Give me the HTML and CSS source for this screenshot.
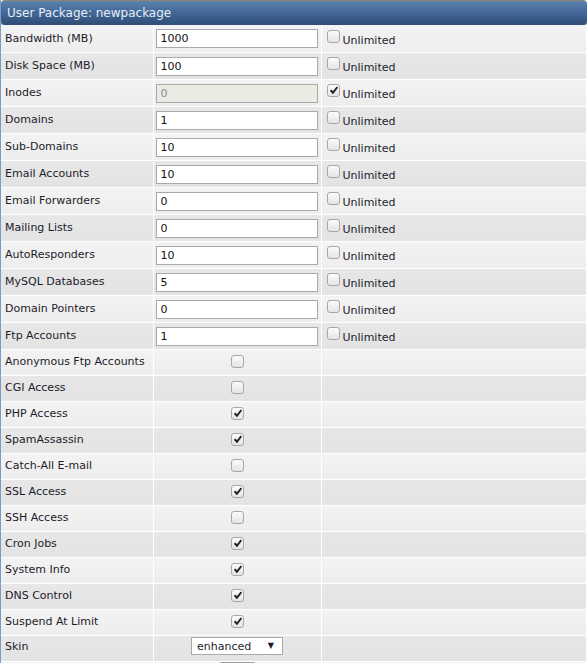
FILE: index.html
```html
<!DOCTYPE html>
<html lang="en">

<head>
    <meta charset="UTF-8">
    <title>User Package: newpackage</title>
    <link rel="stylesheet" href="styles.css">
</head>

<body>
    <div class="panel">
        <div class="panel-title">User Package: newpackage</div>
        <table class="pkg">
            <tr class="limit">
                <td class="label">Bandwidth (MB)</td>
                <td class="field"><input class="num" type="text" value="1000"></td>
                <td class="extra"><span class="cb"></span>Unlimited</td>
            </tr>
            <tr class="limit">
                <td class="label">Disk Space (MB)</td>
                <td class="field"><input class="num" type="text" value="100"></td>
                <td class="extra"><span class="cb"></span>Unlimited</td>
            </tr>
            <tr class="limit">
                <td class="label">Inodes</td>
                <td class="field"><input class="num" type="text" value="0" disabled></td>
                <td class="extra"><span class="cb on"></span>Unlimited</td>
            </tr>
            <tr class="limit">
                <td class="label">Domains</td>
                <td class="field"><input class="num" type="text" value="1"></td>
                <td class="extra"><span class="cb"></span>Unlimited</td>
            </tr>
            <tr class="limit">
                <td class="label">Sub-Domains</td>
                <td class="field"><input class="num" type="text" value="10"></td>
                <td class="extra"><span class="cb"></span>Unlimited</td>
            </tr>
            <tr class="limit">
                <td class="label">Email Accounts</td>
                <td class="field"><input class="num" type="text" value="10"></td>
                <td class="extra"><span class="cb"></span>Unlimited</td>
            </tr>
            <tr class="limit">
                <td class="label">Email Forwarders</td>
                <td class="field"><input class="num" type="text" value="0"></td>
                <td class="extra"><span class="cb"></span>Unlimited</td>
            </tr>
            <tr class="limit">
                <td class="label">Mailing Lists</td>
                <td class="field"><input class="num" type="text" value="0"></td>
                <td class="extra"><span class="cb"></span>Unlimited</td>
            </tr>
            <tr class="limit">
                <td class="label">AutoResponders</td>
                <td class="field"><input class="num" type="text" value="10"></td>
                <td class="extra"><span class="cb"></span>Unlimited</td>
            </tr>
            <tr class="limit">
                <td class="label">MySQL Databases</td>
                <td class="field"><input class="num" type="text" value="5"></td>
                <td class="extra"><span class="cb"></span>Unlimited</td>
            </tr>
            <tr class="limit">
                <td class="label">Domain Pointers</td>
                <td class="field"><input class="num" type="text" value="0"></td>
                <td class="extra"><span class="cb"></span>Unlimited</td>
            </tr>
            <tr class="limit">
                <td class="label">Ftp Accounts</td>
                <td class="field"><input class="num" type="text" value="1"></td>
                <td class="extra"><span class="cb"></span>Unlimited</td>
            </tr>
            <tr class="opt">
                <td class="label">Anonymous Ftp Accounts</td>
                <td class="center"><span class="cb"></span></td>
                <td></td>
            </tr>
            <tr class="opt">
                <td class="label">CGI Access</td>
                <td class="center"><span class="cb"></span></td>
                <td></td>
            </tr>
            <tr class="opt">
                <td class="label">PHP Access</td>
                <td class="center"><span class="cb on"></span></td>
                <td></td>
            </tr>
            <tr class="opt">
                <td class="label">SpamAssassin</td>
                <td class="center"><span class="cb on"></span></td>
                <td></td>
            </tr>
            <tr class="opt">
                <td class="label">Catch-All E-mail</td>
                <td class="center"><span class="cb"></span></td>
                <td></td>
            </tr>
            <tr class="opt">
                <td class="label">SSL Access</td>
                <td class="center"><span class="cb on"></span></td>
                <td></td>
            </tr>
            <tr class="opt">
                <td class="label">SSH Access</td>
                <td class="center"><span class="cb"></span></td>
                <td></td>
            </tr>
            <tr class="opt">
                <td class="label">Cron Jobs</td>
                <td class="center"><span class="cb on"></span></td>
                <td></td>
            </tr>
            <tr class="opt">
                <td class="label">System Info</td>
                <td class="center"><span class="cb on"></span></td>
                <td></td>
            </tr>
            <tr class="opt">
                <td class="label">DNS Control</td>
                <td class="center"><span class="cb on"></span></td>
                <td></td>
            </tr>
            <tr class="opt">
                <td class="label">Suspend At Limit</td>
                <td class="center"><span class="cb on"></span></td>
                <td></td>
            </tr>
            <tr class="opt skin">
                <td class="label">Skin</td>
                <td class="center"><span class="select">enhanced<span class="arrow">&#9660;</span></span></td>
                <td></td>
            </tr>
            <tr class="opt last">
                <td class="label"></td>
                <td class="center top"><button class="btn">Save</button></td>
                <td></td>
            </tr>
        </table>
    </div>
</body>

</html>
```

FILE: styles.css
```css
/* General Reset */
* {
    margin: 0;
    padding: 0;
    box-sizing: border-box;
}

body {
    font-family: 'DejaVu Sans', Verdana, sans-serif;
    font-size: 11px;
    color: #1c1c2a;
    background: #fff;
}

.panel {
    width: 587px;
    border-left: 1px solid #7b9cc2;
}

.panel-title {
    height: 25px;
    padding: 5px 6px 0;
    font-size: 12px;
    color: #e6edf5;
    background: linear-gradient(#5b83ae, #44699a 45%, #2e4d76);
    border-top: 1px solid #8d8475;
    border-radius: 4px;
    box-shadow: 0 1px 0 #8b8b8b;
}

.pkg {
    width: 586px;
    border-collapse: collapse;
    table-layout: fixed;
}

.pkg td {
    border-bottom: 1px solid #fff;
    border-right: 1px solid #fff;
    vertical-align: middle;
}

.pkg td:nth-child(1) {
    width: 152px;
}

.pkg td:nth-child(2) {
    width: 168px;
}

.pkg tr:nth-child(odd) td {
    background: linear-gradient(#f3f3f3, #ededed);
}

.pkg tr:nth-child(even) td {
    background: linear-gradient(#e7e7e7, #e3e3e3);
}

.pkg tr.limit td {
    height: 27px;
}

.pkg tr.opt td {
    height: 26px;
}

.label {
    padding: 0 0 0 4px;
    white-space: nowrap;
}

.opt .label {
    padding-bottom: 2px;
}

.skin .label {
    padding-bottom: 4px;
}

.field {
    padding: 0 0 0 2px;
}

.num {
    display: block;
    width: 162px;
    height: 19px;
    border: 1px solid #a9a9a9;
    background: #fff;
    font-family: inherit;
    font-size: 11px;
    color: #111;
    padding: 0 4px;
    margin-top: 1px;
}

.num:disabled {
    background: #ebebe4;
    color: #8a8a8a;
}

.extra {
    padding: 0 0 0 5px;
}

.cb {
    display: inline-block;
    width: 13px;
    height: 13px;
    border: 1px solid #a7a7a7;
    border-radius: 3px;
    background: linear-gradient(#fcfcfc, #e4e4e4);
    vertical-align: 1px;
    margin-right: 3px;
    position: relative;
}

.cb.on::after {
    content: '';
    position: absolute;
    left: 2px;
    top: 1px;
    width: 8px;
    height: 8px;
    background: no-repeat center / 8px 8px url("data:image/svg+xml,%3Csvg xmlns='http://www.w3.org/2000/svg' viewBox='0 0 8 8'%3E%3Cpath d='M0.6 4.3 L2.9 6.8 L7.4 1' fill='none' stroke='%23222' stroke-width='2'/%3E%3C/svg%3E");
}

.center {
    text-align: center;
}

.center .cb {
    margin-right: 0;
    vertical-align: middle;
}

.opt .center {
    padding-bottom: 1px;
}

.select {
    display: inline-block;
    width: 92px;
    height: 18px;
    border: 1px solid #a9a9a9;
    background: #fff;
    text-align: left;
    padding: 1px 0 0 5px;
    line-height: 15px;
    font-size: 11px;
    margin-bottom: 3px;
}

.arrow {
    float: right;
    font-size: 8px;
    margin-right: 8px;
    line-height: 14px;
}

.pkg td.top {
    vertical-align: top;
}

.btn {
    display: inline-block;
    width: 37px;
    height: 22px;
    padding-top: 6px;
    border: 1px solid #999;
    border-radius: 3px;
    background: linear-gradient(#f6f6f6, #dcdcdc);
    font-family: inherit;
    font-size: 11px;
}
```
